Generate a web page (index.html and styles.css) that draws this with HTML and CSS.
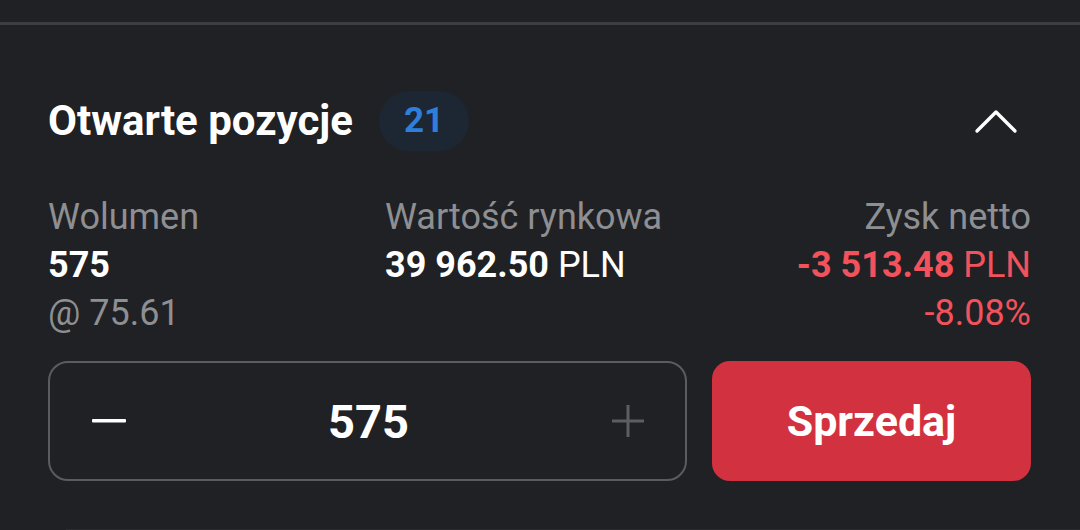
FILE: index.html
```html
<!DOCTYPE html>
<html lang="pl">
<head>
<meta charset="utf-8">
<link rel="stylesheet" href="styles.css">
</head>
<body>
<div class="screen">
  <div class="top-strip"></div>
  <div class="rule"></div>
  <section class="panel">
    <div class="header">
      <h2 class="title">Otwarte pozycje</h2>
      <span class="badge">21</span>
      <button class="collapse" aria-label="Zwiń">
        <svg width="44" height="26" viewBox="0 0 44 26"><path d="M3 23 L22 4 L41 23" fill="none" stroke="#ffffff" stroke-width="3.4" stroke-linecap="round" stroke-linejoin="round"/></svg>
      </button>
    </div>
    <div class="stats">
      <div class="stat">
        <div class="label">Wolumen</div>
        <div class="value"><b>575</b></div>
        <div class="sub">@ 75.61</div>
      </div>
      <div class="stat">
        <div class="label">Wartość rynkowa</div>
        <div class="value"><b>39 962.50</b> PLN</div>
      </div>
      <div class="stat right">
        <div class="label">Zysk netto</div>
        <div class="value neg"><b>-3 513.48</b> PLN</div>
        <div class="sub neg">-8.08%</div>
      </div>
    </div>
    <div class="actions">
      <div class="stepper">
        <button class="step minus" aria-label="Mniej">
          <svg width="34" height="4" viewBox="0 0 34 4"><rect x="0" y="0" width="34" height="3.4" rx="1" fill="#ffffff"/></svg>
        </button>
        <span class="qty">575</span>
        <button class="step plus" aria-label="Więcej">
          <svg width="34" height="34" viewBox="0 0 34 34"><path d="M17 1 V33 M1 17 H33" stroke="#5d5e61" stroke-width="3" fill="none"/></svg>
        </button>
      </div>
      <button class="sell">Sprzedaj</button>
    </div>
  </section>
  <div class="bottom-rule"></div>
</div>
</body>
</html>
```

FILE: styles.css
```css
* { box-sizing: border-box; }
html, body {
  margin: 0;
  padding: 0;
  background: #202124;
}
body {
  font-family: Roboto, "Liberation Sans", sans-serif;
  color: #ffffff;
  width: 1080px;
  height: 530px;
  overflow: hidden;
}
.screen {
  display: flex;
  flex-direction: column;
  height: 530px;
}
.top-strip {
  height: 22px;
}
.rule {
  height: 3px;
  background: #3d3e41;
}
.panel {
  padding: 66px 49px 0 48px;
  display: flex;
  flex-direction: column;
}
.header {
  display: flex;
  align-items: center;
  height: 60px;
}
.title {
  margin: 0;
  font-size: 42px;
  font-weight: 700;
  line-height: 60px;
}
.badge {
  margin-left: 26px;
  height: 60px;
  padding: 0 25px;
  border-radius: 30px;
  background: #1d2733;
  color: #2f7fda;
  font-size: 35px;
  font-weight: 700;
  line-height: 60px;
}
.collapse {
  margin-left: auto;
  margin-right: 13px;
  background: none;
  border: 0;
  padding: 0;
  display: flex;
}
.stats {
  margin-top: 42px;
  display: grid;
  grid-template-columns: 337px 1fr auto;
  font-size: 36px;
  line-height: 48px;
}
.label, .sub {
  color: #8e8f93;
}
.value {
  color: #ffffff;
}
.value b {
  font-weight: 700;
}
.right {
  text-align: right;
}
.neg {
  color: #f1525c;
}
.actions {
  margin-top: 24px;
  display: flex;
  gap: 25px;
}
.stepper {
  width: 639px;
  height: 120px;
  border: 2px solid #5b5c5f;
  border-radius: 20px;
  display: flex;
  align-items: center;
  justify-content: space-between;
  padding: 0 40px 0 42px;
}
.step {
  background: none;
  border: 0;
  padding: 0;
  display: flex;
}
.qty {
  font-size: 47px;
  font-weight: 700;
  color: #ffffff;
}
.sell {
  flex: 1;
  height: 120px;
  border: 0;
  border-radius: 18px;
  background: #d2323f;
  color: #ffffff;
  font-family: Roboto, "Liberation Sans", sans-serif;
  font-size: 43px;
  font-weight: 700;
}
.bottom-rule {
  margin-top: auto;
  margin-left: 66px;
  height: 1px;
  background: #2b2c2f;
}
```
